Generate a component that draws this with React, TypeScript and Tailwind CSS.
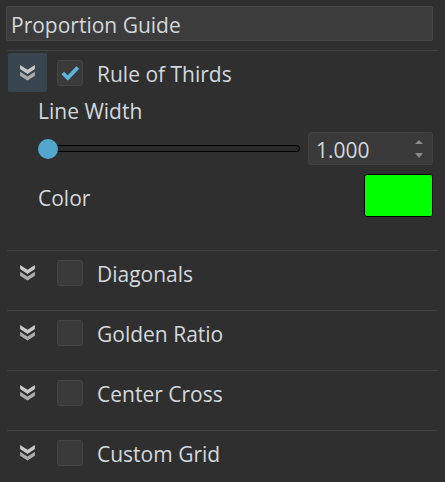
import React from "react";

const font = { fontFamily: '"Open Sans", "Noto Sans", sans-serif' };

function Chevrons() {
  return (
    <svg width="17" height="17" viewBox="0 0 16 16">
      <polygon points="1,1 8,5.5 15,1 15,4.8 8,9.3 1,4.8" fill="#c8c8c8" />
      <polygon points="1,7.2 8,11.7 15,7.2 15,11 8,15.5 1,11" fill="#ababab" />
    </svg>
  );
}

function Checkbox({ checked }: { checked?: boolean }) {
  return (
    <div className="w-[26px] h-[26px] rounded-[3px] bg-[#3a3a3a] border border-[#444444] flex items-center justify-center">
      {checked && (
        <svg width="20" height="20" viewBox="0 0 18 18">
          <path d="M2.5 9 L7 13.5 L16 4" fill="none" stroke="#5eb3dc" strokeWidth="3.4" strokeLinecap="butt" strokeLinejoin="miter" />
        </svg>
      )}
    </div>
  );
}

function Header({ label, checked, active }: { label: string; checked?: boolean; active?: boolean }) {
  return (
    <div className="flex items-center h-[39px] pl-[8px]">
      <div className={`w-[39px] h-[39px] rounded-[2px] flex items-center justify-center ${active ? "bg-[#37464e]" : ""}`}>
        <Chevrons />
      </div>
      <div className="ml-[10px]">
        <Checkbox checked={checked} />
      </div>
      <span className="ml-[14px] pt-[4px] text-[21px] text-[#d2d8dd] leading-none">{label}</span>
    </div>
  );
}

function Sep() {
  return <div className="mx-[7px] h-px bg-[#424242]" />;
}

export default function App() {
  return (
    <div className="w-[445px] h-[482px] bg-[#2f2f2f] overflow-hidden" style={font}>
      <div className="pt-[6px] px-[6px] pr-[12px]">
        <div className="h-[35px] bg-[#3c3c3c] border border-[#474747] rounded-[2px] flex items-center pl-[4px] pt-[4px] text-[21px] leading-none text-[#d2d8dd]">
          Proportion Guide
        </div>
      </div>
      <div className="mt-[9px]">
        <Sep />
        <div className="mt-[2px]">
          <Header label="Rule of Thirds" checked active />
        </div>
        <div className="pl-[38px] pr-[12px]">
          <div className="mt-[6px] h-[24px] pt-[2px] flex items-center text-[21px] leading-none text-[#d2d8dd]">Line Width</div>
          <div className="mt-[10px] h-[33px] flex items-center">
            <div className="relative w-[262px] h-[20px] flex items-center">
              <div className="absolute left-[10px] right-0 h-[7px] rounded-full bg-[#2a2a2a] border border-black" />
              <div className="absolute left-0 w-[20px] h-[20px] rounded-full bg-[#53a6cc]" />
            </div>
            <div className="ml-auto w-[125px] h-[33px] rounded-[3px] bg-[#3a3a3a] border border-[#414141] flex items-center pl-[7px] pr-[9px]">
              <span className="pt-[4px] text-[21px] leading-none text-[#d2d8dd]">1.000</span>
              <div className="ml-auto flex flex-col items-center gap-[9px]">
                <svg width="8" height="4" viewBox="0 0 8 4"><polygon points="4,0 8,4 0,4" fill="#8a8a8a" /></svg>
                <svg width="8" height="5" viewBox="0 0 8 5"><polygon points="0,0 8,0 4,5" fill="#8a8a8a" /></svg>
              </div>
            </div>
          </div>
          <div className="mt-[9px] h-[43px] flex items-center">
            <span className="pt-[5px] text-[21px] leading-none text-[#d2d8dd]">Color</span>
            <div className="ml-auto w-[69px] h-[43px] rounded-[3px] bg-[#00ff00] border border-black" />
          </div>
        </div>
        <div className="mt-[33px]">
          {["Diagonals", "Golden Ratio", "Center Cross", "Custom Grid"].map((l) => (
            <div key={l}>
              <Sep />
              <div className="mt-[2px] mb-[18px]">
                <Header label={l} />
              </div>
            </div>
          ))}
        </div>
      </div>
    </div>
  );
}
